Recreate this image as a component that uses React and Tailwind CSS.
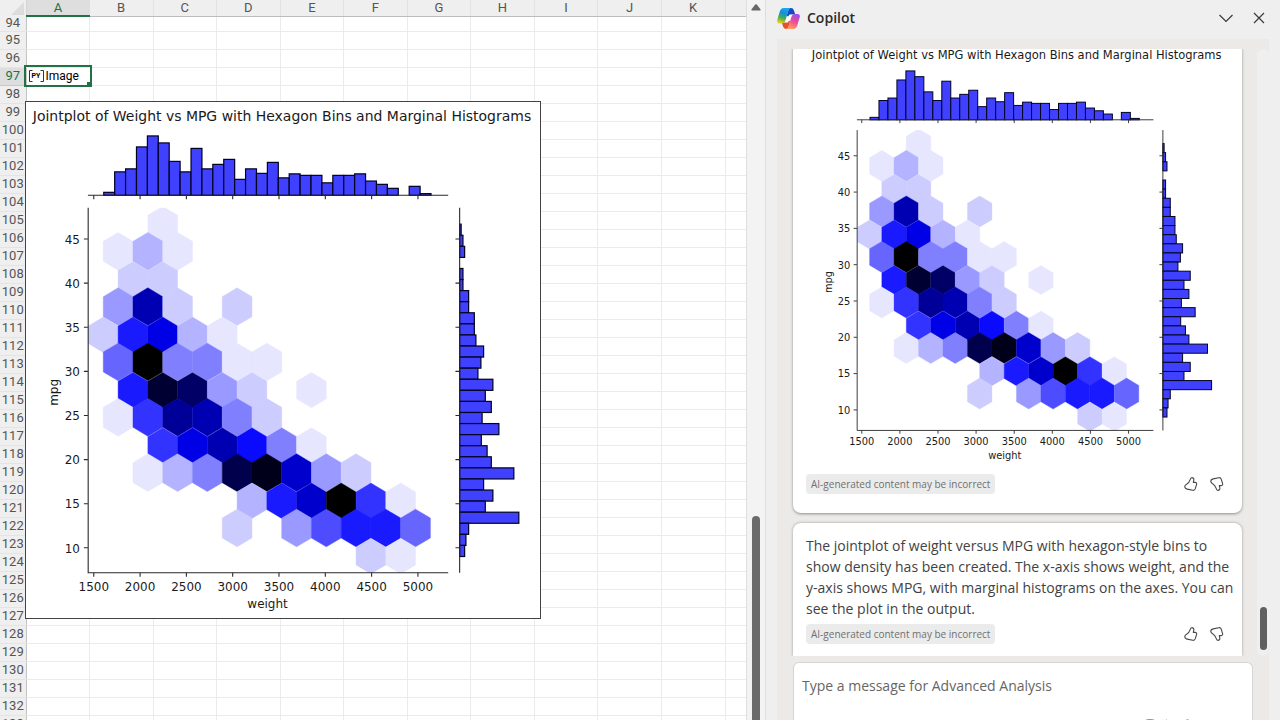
import { useState } from "react";

const COLUMNS = ["A", "B", "C", "D", "E", "F", "G", "H", "I", "J", "K"];
const ROWS = Array.from({ length: 40 }, (_, i) => 94 + i);

const X_TICKS = [1500, 2000, 2500, 3000, 3500, 4000, 4500, 5000];
const Y_TICKS = [45, 40, 35, 30, 25, 20, 15, 10];

const WEIGHT_BARS = [
  3, 23.5, 26.5, 48.5, 59.5, 52.5, 34, 23.5, 47, 26.5, 31, 36, 16, 26.5, 22, 33, 17.5, 21.5, 20, 20, 12.5, 20, 20, 21.5,
  14.3, 11, 7, 0, 9, 1.7,
];
const MPG_BARS = [
  1.5, 3.3, 5, 0, 3.3, 3.3, 9, 9, 14.7, 14.7, 16.3, 24, 21.3, 18.3, 33.3, 25.7, 31.7, 22.5, 39.3, 21.7, 27.5, 31.7,
  54.3, 24, 33.3, 25.7, 59.3, 9, 6.3, 5,
];

// one entry per hexagon row, top to bottom: { column: colour }
const HEX_ROWS = [
  { 2: "#e6e6ff" },
  { 0: "#e6e6ff", 1: "#b3b3ff", 2: "#e6e6ff" },
  { 1: "#ccccff", 2: "#ccccff" },
  { 0: "#9999ff", 1: "#0000b3", 2: "#ccccff", 4: "#ccccff" },
  { 0: "#ccccff", 1: "#1a1aff", 2: "#0000e6", 3: "#b3b3ff", 4: "#e6e6ff" },
  { 0: "#6666ff", 1: "#000000", 2: "#8080ff", 3: "#8080ff", 4: "#e6e6ff", 5: "#e6e6ff" },
  { 1: "#1a1aff", 2: "#000033", 3: "#000066", 4: "#9999ff", 5: "#ccccff", 7: "#e6e6ff" },
  { 0: "#e6e6ff", 1: "#3333ff", 2: "#000099", 3: "#0000b3", 4: "#8080ff", 5: "#ccccff" },
  { 2: "#3333ff", 3: "#0000e6", 4: "#0000b3", 5: "#0a0aff", 6: "#8080ff", 7: "#e6e6ff" },
  { 1: "#e6e6ff", 2: "#b3b3ff", 3: "#8080ff", 4: "#00004d", 5: "#00001a", 6: "#0000cc", 7: "#9999ff", 8: "#ccccff" },
  { 5: "#b3b3ff", 6: "#1a1aff", 7: "#0000cc", 8: "#000000", 9: "#3333ff", 10: "#e6e6ff" },
  { 4: "#ccccff", 6: "#9999ff", 7: "#4d4dff", 8: "#1a1aff", 9: "#1a1aff", 10: "#6666ff" },
  { 9: "#ccccff", 10: "#e6e6ff" },
];

function hexPoints(row, col) {
  const odd = row % 2 === 1;
  const x = 77.4 + 29.8 * col + (odd ? 14.9 : 0);
  const top = odd ? 131.7 + ((row - 1) / 2) * 55.45 : 105.6 + (row / 2) * 55.45;
  const side = odd ? 20 : 17.6;
  const a = top + 8.9;
  const b = a + side;
  return `${x},${top} ${x + 14.9},${a} ${x + 14.9},${b} ${x},${b + 8.9} ${x - 14.9},${b} ${x - 14.9},${a}`;
}

function JointPlot({ id, className }) {
  return (
    <svg viewBox="0 1 515 517" className={className} fontFamily="'DejaVu Sans', sans-serif" fill="#1a1a1a">
      <defs>
        <clipPath id={id}>
          <rect x="62" y="107" width="361" height="366" />
        </clipPath>
      </defs>
      <text x="256.5" y="20" fontSize="14" textAnchor="middle">
        Jointplot of Weight vs MPG with Hexagon Bins and Marginal Histograms
      </text>

      <g clipPath={`url(#${id})`}>
        {HEX_ROWS.map((row, r) =>
          Object.entries(row).map(([c, color]) => (
            <polygon key={`${r}-${c}`} points={hexPoints(r, Number(c))} fill={color} stroke={color} strokeWidth="0.4" />
          ))
        )}
      </g>

      <g fill="#4040ff" stroke="#000020" strokeWidth="1.2">
        {WEIGHT_BARS.map((h, i) => h > 0 && <rect key={i} x={77.9 + i * 10.93} y={94.5 - h} width="10.93" height={h} />)}
        {MPG_BARS.map((w, i) => w > 0 && <rect key={i} x="434.5" y={123.4 + i * 11.1} width={w} height="11.1" />)}
      </g>

      <g stroke="#2a2a2a" strokeWidth="1.1">
        <path d="M62 94.5H423M62.3 107V472.7H423M434.5 107V472.7" fill="none" />
        {X_TICKS.map((t, i) => (
          <path key={t} d={`M${67.9 + i * 46.4} 94.5v4M${67.9 + i * 46.4} 472.7v4`} />
        ))}
        {Y_TICKS.map((t, i) => (
          <path key={t} d={`M62 ${138.3 + i * 44.2}h-4M434.3 ${138.3 + i * 44.2}h-4`} />
        ))}
      </g>

      <g fontSize="12">
        {X_TICKS.map((t, i) => (
          <text key={t} x={67.9 + i * 46.4} y="491" textAnchor="middle">
            {t}
          </text>
        ))}
        {Y_TICKS.map((t, i) => (
          <text key={t} x="54" y={143 + i * 44.2} textAnchor="end">
            {t}
          </text>
        ))}
        <text x="242" y="508" textAnchor="middle">
          weight
        </text>
        <text transform="translate(32 292) rotate(-90)" textAnchor="middle">
          mpg
        </text>
      </g>
    </svg>
  );
}

function CopilotLogo() {
  return (
    <svg viewBox="0 0 68 62" className="h-[21px] w-[23px]" aria-hidden="true">
      <defs>
        <linearGradient id="cool" x1="0.6" y1="0" x2="0.3" y2="1">
          <stop offset="0" stopColor="#1aa5f0" />
          <stop offset="0.35" stopColor="#1b8fd0" />
          <stop offset="0.65" stopColor="#45b04e" />
          <stop offset="1" stopColor="#f2d21a" />
        </linearGradient>
        <linearGradient id="warm" x1="0.7" y1="0" x2="0.3" y2="1">
          <stop offset="0" stopColor="#a34be8" />
          <stop offset="0.5" stopColor="#ef5093" />
          <stop offset="1" stopColor="#ffa45c" />
        </linearGradient>
      </defs>
      <path d="M36 0H41Q48 0 50 7L54 19H46Q39 19 36 27L29 22Z" fill="#1748c4" />
      <path d="M32 62H27Q20 62 18 55L14 43H22Q29 43 32 35L39 40Z" fill="#e8502f" />
      <path d="M37 19H46L32 43H22Z" fill="#fff" />
      <path d="M20 0H42Q36 1 33 10L24 39Q21 46 14 46H8Q-2 46 1 34L8 11Q11 0 20 0Z" fill="url(#cool)" />
      <path d="M48 62H26Q32 61 35 52L44 23Q47 18 54 18H60Q70 18 67 28L60 51Q57 62 48 62Z" fill="url(#warm)" />
    </svg>
  );
}

function PyBadge() {
  return (
    <span className="relative flex h-3 w-[15px] items-center justify-center text-[7px] font-bold">
      <svg viewBox="0 0 15 12" className="absolute inset-0" fill="none" stroke="#333">
        <path d="M3.5 .5H.5V11.5H3.5M11.5 .5H14.5V11.5H11.5" />
      </svg>
      PY
    </span>
  );
}

function ThumbIcon({ down }) {
  return (
    <svg viewBox="0 0 14 14" className={down ? "size-[14px] -scale-y-100" : "size-[14px]"} fill="none" stroke="#484848" strokeWidth="1.1" strokeLinejoin="round">
      <path d="M7.6.7C8.9.5 10.2 1.5 9.8 3.2L9.3 5.4H11.2C12.3 5.5 12.9 6.3 12.6 7.3L11.2 11.9C10.8 13 9.9 13.5 8.8 13.3L3.2 12.1C1.8 11.8.8 10.6.8 9.4C.8 8.3 1.5 7.8 2.6 7.3C4.8 6.3 5.6 4.4 6.4 2.1C6.7 1.2 6.9.9 7.6.7Z" />
    </svg>
  );
}

function Feedback() {
  const [vote, setVote] = useState(null);
  return (
    <div className="flex items-center justify-between">
      <span className="rounded bg-[#ebebeb] px-[5px] text-[10px] leading-5 text-[#707070]">
        AI-generated content may be incorrect
      </span>
      <div className="flex gap-3 pr-[5px]">
        <button aria-label="Like" aria-pressed={vote === "up"} onClick={() => setVote("up")}>
          <ThumbIcon />
        </button>
        <button aria-label="Dislike" aria-pressed={vote === "down"} onClick={() => setVote("down")}>
          <ThumbIcon down />
        </button>
      </div>
    </div>
  );
}

function Sheet() {
  return (
    <main className="relative min-w-0 flex-1 overflow-hidden bg-white">
      <table className="h-[calc(100%+14px)] w-full table-fixed border-collapse font-['Roboto',sans-serif] text-[13px] leading-[14px] text-[#555]">
        <thead>
          <tr className="h-4 bg-[#efefef]">
            <th className="w-[26px] border-r border-[#d4d4d4] p-0">
              <svg viewBox="0 0 26 15" className="h-[15px] w-[26px]">
                <path d="M24 1V14H11Z" fill="#dcdcdc" />
              </svg>
            </th>
            {COLUMNS.map((c) => (
              <th
                key={c}
                className={
                  c === "A"
                    ? "border-b-2 border-[#217346] bg-[#dedede] p-0 font-normal text-[#217346]"
                    : "border-r border-b border-r-[#e2e2e2] border-b-[#bdbdbd] p-0 font-normal"
                }
              >
                {c}
              </th>
            ))}
            <th className="w-[21px] border-b border-[#bdbdbd] p-0" />
          </tr>
        </thead>
        <tbody>
          {ROWS.map((n) => (
            <tr key={n} className={n === 94 ? "h-[15px]" : ""}>
              <th
                className={
                  n === 97
                    ? "border-r border-b border-[#c8c8c8] bg-[#dedede] p-0 font-normal text-[#217346]"
                    : "border-r border-b border-r-[#c4c4c4] border-b-[#e4e4e4] bg-[#efefef] p-0 font-normal"
                }
              >
                {n}
              </th>
              {COLUMNS.map((c) =>
                c === "A" && n === 97 ? (
                  <td key={c} className="relative p-0 text-xs leading-[14px] text-black outline-2 outline-[#217346]">
                    <span className="flex items-center gap-[2px] pl-[2px]">
                      <PyBadge />
                      Image
                    </span>
                    <span className="absolute -right-px -bottom-px size-1 bg-[#217346]" />
                  </td>
                ) : (
                  <td key={c} className="border-r border-b border-[#ebebeb] p-0" />
                )
              )}
              <td className="border-b border-[#ebebeb] p-0" />
            </tr>
          ))}
        </tbody>
      </table>
      {/* picture floating over the cells */}
      <div className="absolute top-[101px] left-[25px] border border-[#444] bg-white">
        <JointPlot id="sheet-plot" className="block w-[514px]" />
      </div>
    </main>
  );
}

function SheetScrollbar() {
  return (
    <div className="flex w-5 flex-col items-center border-x border-[#dcdfe2] bg-[#f3f3f3]">
      <svg viewBox="0 0 10 7" className="mt-1 h-[7px] w-[10px]" fill="#686868">
        <path d="M4.2.6Q5 0 5.8.6L9.6 5.6Q9.8 6.6 9 6.6H1Q.2 6.6.4 5.6Z" />
      </svg>
      <div className="min-h-0 flex-[505]" />
      <div className="min-h-0 w-2 flex-[204] rounded-t bg-[#6b6b6b]" />
    </div>
  );
}

function CopilotPane() {
  return (
    <aside className="flex w-[514px] shrink-0 flex-col bg-[#efefef] font-['Open_Sans',sans-serif]">
      <header className="flex h-[39px] shrink-0 items-center pr-3 pb-[3px] pl-[11px]">
        <CopilotLogo />
        <h1 className="ml-[7px] flex-1 text-sm font-semibold text-[#2b2b2b]">Copilot</h1>
        <button aria-label="Collapse" className="mr-[19px]">
          <svg viewBox="0 0 16 16" className="size-4" fill="none" stroke="#3a3a3a" strokeWidth="1.2">
            <path d="M1.5 5L8 11.5L14.5 5" />
          </svg>
        </button>
        <button aria-label="Close">
          <svg viewBox="0 0 12 12" className="mr-[3px] size-3" fill="none" stroke="#3a3a3a" strokeWidth="1.2">
            <path d="M1 1L11 11M11 1L1 11" />
          </svg>
        </button>
      </header>

      <div className="mx-[11px] flex min-h-0 flex-1 flex-col bg-[#ebeae8] pt-[10px]">
        <div className="flex min-h-0 flex-1">
          <div className="flex min-w-0 flex-1 flex-col justify-end gap-[10px] overflow-hidden pr-[15px] pl-4">
            <article className="rounded-lg bg-white px-[13px] pb-[19px] shadow-[0_1px_3px_rgba(0,0,0,0.4)]">
              <JointPlot id="chat-plot" className="mb-[6px] block w-full" />
              <Feedback />
            </article>
            <article className="rounded-t-lg bg-white px-[13px] pt-3 pb-3 shadow-[0_0_3px_rgba(0,0,0,0.35)]">
              <p className="-mr-2 mb-[5px] text-sm leading-[21px] text-[#424242]">
                The jointplot of weight versus MPG with hexagon-style bins to show density has been created. The x-axis
                shows weight, and the y-axis shows MPG, with marginal histograms on the axes. You can see the plot in the
                output.
              </p>
              <Feedback />
            </article>
          </div>
          <div className="flex w-3 flex-col items-center rounded-full bg-[#efefef] pb-[6px]">
            <div className="mt-auto h-[43px] w-[7px] rounded-full bg-[#606060]" />
          </div>
        </div>
        <div className="mx-4 mt-[6px] h-[58px] overflow-hidden rounded-t-md border border-b-0 border-[#d4d4d4] bg-white px-2 pt-[13px]">
          <input
            type="text"
            aria-label="Message"
            placeholder="Type a message for Advanced Analysis"
            className="block w-full text-sm leading-5 outline-none placeholder:text-[#666]"
          />
          <div className="mt-[23px] flex justify-end gap-[10px] pr-[55px]">
            <span className="h-3 w-3 rounded-sm border border-[#9a9a9a]" />
            <span className="h-3 w-px bg-[#d0d0d0]" />
            <span className="ml-[9px] h-3 w-[3px] rounded-t-sm bg-[#b0b0b0]" />
          </div>
        </div>
      </div>
    </aside>
  );
}

export default function App() {
  return (
    <div className="flex h-screen overflow-hidden">
      <Sheet />
      <SheetScrollbar />
      <CopilotPane />
    </div>
  );
}
